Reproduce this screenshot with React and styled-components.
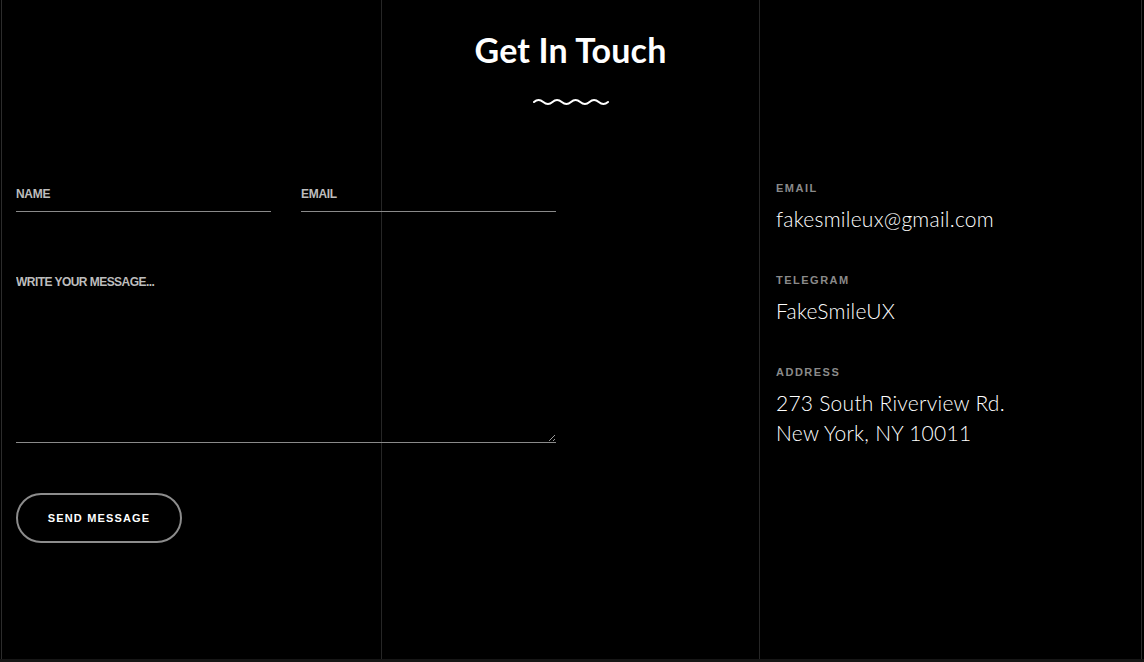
import React from "react";
import styled, { createGlobalStyle } from "styled-components";

const Global = createGlobalStyle`
  html, body { margin: 0; padding: 0; }
  body { background: #161616; width: 1144px; height: 662px; overflow: hidden; }
  * { box-sizing: border-box; }
`;

const Section = styled.section`
  position: relative;
  width: 1144px;
  height: 659px;
  background-color: #000;
  background-image:
    linear-gradient(#2c2c2c, #2c2c2c),
    linear-gradient(#262626, #262626),
    linear-gradient(#262626, #262626),
    linear-gradient(#2c2c2c, #2c2c2c);
  background-size: 1px 100%;
  background-repeat: no-repeat;
  background-position: 1px 0, 381px 0, 759px 0, 1141px 0;
  padding-top: 30px;
  font-family: "Lato", "Liberation Sans", sans-serif;
  color: #fff;
`;

const Header = styled.header`
  display: flex;
  flex-direction: column;
  align-items: center;
  gap: 26px;
  padding-right: 3px;
`;

const Title = styled.h2`
  margin: 0;
  font-family: "Lato", sans-serif;
  font-weight: 700;
  font-size: 34px;
  line-height: 40px;
  letter-spacing: 0.15px;
  color: #fff;
`;

const Row = styled.div`
  display: grid;
  grid-template-columns: 760px 1fr;
  margin-top: 69px;
`;

const Form = styled.form`
  display: flex;
  flex-direction: column;
  padding-left: 16px;
  width: 556px;
`;

const Fields = styled.div`
  display: flex;
  gap: 30px;
`;

const placeholder = `
  font-family: "Liberation Sans", Arial, sans-serif;
  font-weight: 700;
  font-size: 12px;
  color: #bdbdbd;
  text-transform: uppercase;
`;

const Input = styled.input`
  width: 255px;
  height: 37px;
  padding: 2px 0 0;
  background: transparent;
  border: none;
  border-bottom: 1px solid #8a8a8a;
  outline: none;
  color: #fff;
  ${placeholder}
  letter-spacing: -0.3px;
  &::placeholder { color: #bdbdbd; opacity: 1; }
`;

const TextArea = styled.textarea`
  margin-top: 60px;
  width: 540px;
  height: 171px;
  padding: 2px 0 0;
  background: transparent;
  border: none;
  border-bottom: 1px solid #8a8a8a;
  outline: none;
  color: #fff;
  resize: vertical;
  line-height: 16px;
  ${placeholder}
  letter-spacing: -0.55px;
  &::placeholder { color: #bdbdbd; opacity: 1; }
`;

const Button = styled.button`
  margin-top: 50px;
  width: 166px;
  height: 50px;
  border: 2px solid #8c8c8c;
  border-radius: 25px;
  background: transparent;
  color: #fff;
  font-family: "Liberation Sans", Arial, sans-serif;
  font-weight: 700;
  font-size: 11px;
  letter-spacing: 1.15px;
  cursor: pointer;
  padding: 0;
`;

const Info = styled.div`
  display: flex;
  flex-direction: column;
  gap: 39px;
  padding-left: 16px;
  padding-top: 6px;
`;

const Item = styled.div`
  display: flex;
  flex-direction: column;
  gap: 9px;
`;

const Label = styled.span`
  font-family: "Liberation Sans", Arial, sans-serif;
  font-weight: 700;
  font-size: 11px;
  line-height: 14px;
  letter-spacing: 1.5px;
  color: #8a8a8a;
  text-transform: uppercase;
`;

const Value = styled.div`
  font-family: "Lato", sans-serif;
  font-weight: 300;
  font-size: 21px;
  line-height: 30px;
  letter-spacing: 0.25px;
  color: #fff;
`;

const Wave = () => (
  <svg width="76" height="10" viewBox="0 0 76 10" aria-hidden="true">
    <path
      d="M1 6 Q5.5 2 10.25 6 T19.5 6 T28.75 6 T38 6 T47.25 6 T56.5 6 T65.75 6 T75 6"
      fill="none"
      stroke="#fff"
      strokeWidth="2"
      strokeLinecap="round"
    />
  </svg>
);

export default function App() {
  return (
    <>
      <Global />
      <Section>
        <Header>
          <Title>Get In Touch</Title>
          <Wave />
        </Header>
        <Row>
          <Form onSubmit={(e) => e.preventDefault()}>
            <Fields>
              <Input type="text" placeholder="Name" />
              <Input type="email" placeholder="Email" />
            </Fields>
            <TextArea placeholder="Write your message..." />
            <Button type="submit">SEND MESSAGE</Button>
          </Form>
          <Info>
            <Item>
              <Label>Email</Label>
              <Value>fakesmileux@gmail.com</Value>
            </Item>
            <Item>
              <Label>Telegram</Label>
              <Value>FakeSmileUX</Value>
            </Item>
            <Item>
              <Label>Address</Label>
              <Value>
                273 South Riverview Rd.
                <br />
                New York, NY 10011
              </Value>
            </Item>
          </Info>
        </Row>
      </Section>
    </>
  );
}
